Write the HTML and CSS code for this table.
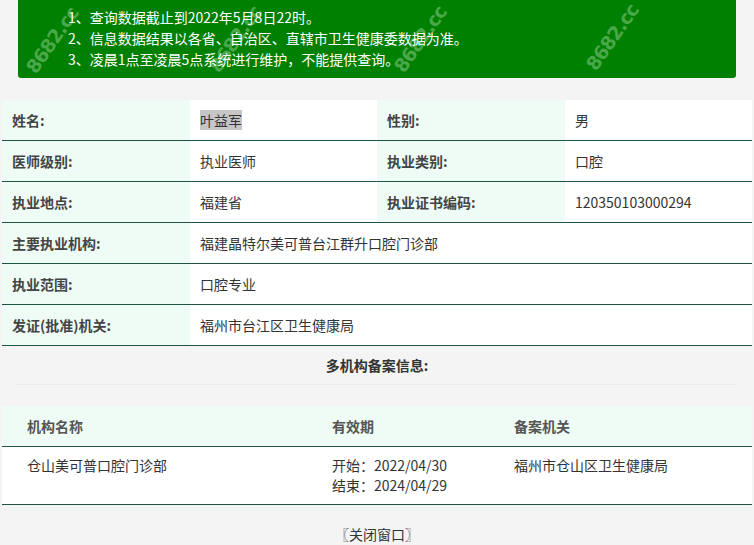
FILE: index.html
```html
<!DOCTYPE html>
<html lang="zh-CN">
<head>
<meta charset="utf-8">
<title>医师信息</title>
<link rel="stylesheet" href="styles.css">
</head>
<body>
<div class="notice">
  <p>1、查询数据截止到2022年5月8日22时。</p>
  <p>2、信息数据结果以各省、自治区、直辖市卫生健康委数据为准。</p>
  <p>3、凌晨1点至凌晨5点系统进行维护，不能提供查询。</p>
  <span class="wm wm1">8682.cc</span>
  <span class="wm wm2">8682.cc</span>
  <span class="wm wm3">8682.cc</span>
  <span class="wm wm4">8682.cc</span>
</div>

<div class="info">
  <div class="row">
    <div class="lab">姓名:</div><div class="val"><span class="sel">叶益军</span></div>
    <div class="lab">性别:</div><div class="val">男</div>
  </div>
  <div class="row">
    <div class="lab">医师级别:</div><div class="val">执业医师</div>
    <div class="lab">执业类别:</div><div class="val">口腔</div>
  </div>
  <div class="row">
    <div class="lab">执业地点:</div><div class="val">福建省</div>
    <div class="lab">执业证书编码:</div><div class="val">120350103000294</div>
  </div>
  <div class="row">
    <div class="lab">主要执业机构:</div><div class="val wide">福建晶特尔美可普台江群升口腔门诊部</div>
  </div>
  <div class="row">
    <div class="lab">执业范围:</div><div class="val wide">口腔专业</div>
  </div>
  <div class="row">
    <div class="lab">发证(批准)机关:</div><div class="val wide">福州市台江区卫生健康局</div>
  </div>
</div>

<div class="multi-title">多机构备案信息:</div>
<div class="divider"></div>

<div class="multi">
  <div class="mrow head">
    <div class="c1">机构名称</div><div class="c2">有效期</div><div class="c3">备案机关</div>
  </div>
  <div class="mrow body">
    <div class="c1">仓山美可普口腔门诊部</div>
    <div class="c2">开始：2022/04/30<br>结束：2024/04/29</div>
    <div class="c3">福州市仓山区卫生健康局</div>
  </div>
</div>

<div class="close">〖关闭窗口〗</div>
</body>
</html>
```

FILE: styles.css
```css
* { box-sizing: border-box; }
html, body { margin: 0; padding: 0; }
body {
  background: #f4f4f4;
  font-family: "Noto Sans CJK SC", "Microsoft YaHei", sans-serif;
  font-size: 14px;
  color: #333;
  width: 754px;
  overflow: hidden;
}
.notice {
  position: relative;
  overflow: hidden;
  margin: 0 18px;
  width: 718px;
  height: 78px;
  background: #008000;
  border-radius: 0 0 3px 3px;
  padding: 7px 0 0 50px;
  color: #fff;
}
.notice p {
  position: relative;
  z-index: 1;
  margin: 0;
  line-height: 21px;
  font-size: 14px;
}
.wm {
  position: absolute;
  width: 76px;
  height: 24px;
  line-height: 24px;
  text-align: center;
  font-family: "DejaVu Sans", sans-serif;
  font-weight: bold;
  font-size: 19px;
  letter-spacing: -1px;
  color: rgba(140, 205, 140, 0.55);
  transform: rotate(-55deg);
  white-space: nowrap;
}
.wm1 { left: -4px; top: 28px; }
.wm2 { left: 179px; top: 27px; }
.wm3 { left: 364px; top: 27px; }
.wm4 { left: 556px; top: 25px; }

.info {
  margin: 22px 2px 0;
  width: 750px;
}
.row {
  display: grid;
  grid-template-columns: 188px 187px 188px 187px;
  border-bottom: 1px solid #1f5447;
  height: 41px;
}
.lab, .val {
  display: flex;
  align-items: center;
  padding-left: 10px;
  padding-bottom: 1px;
  line-height: 20px;
}
.lab {
  background: #effcf6;
  font-weight: bold;
  color: #444;
}
.val { background: #fff; color: #333; }
.val.wide { grid-column: 2 / 5; }
.sel { background: #c6c6c6; }

.multi-title {
  text-align: center;
  font-weight: bold;
  color: #333;
  line-height: 20px;
  padding-top: 9px;
  height: 38px;
}
.divider {
  margin: 0 18px 0 15px;
  height: 1px;
  background: #ebebeb;
}
.multi {
  margin: 21px 2px 0;
  width: 750px;
}
.mrow {
  display: grid;
  grid-template-columns: 320px 182px 248px;
  border-bottom: 1px solid #1f5447;
}
.mrow > div { line-height: 20px; }
.mrow .c1 { padding-left: 25px; }
.mrow .c2, .mrow .c3 { padding-left: 10px; }
.mrow.head {
  background: #effcf6;
  height: 41px;
  align-items: center;
  padding-bottom: 1px;
  font-weight: bold;
  color: #555;
}
.mrow.body {
  background: #fff;
  height: 58px;
  padding-top: 8px;
}
.close {
  text-align: center;
  line-height: 20px;
  margin-top: 19px;
  color: #333;
}
```
